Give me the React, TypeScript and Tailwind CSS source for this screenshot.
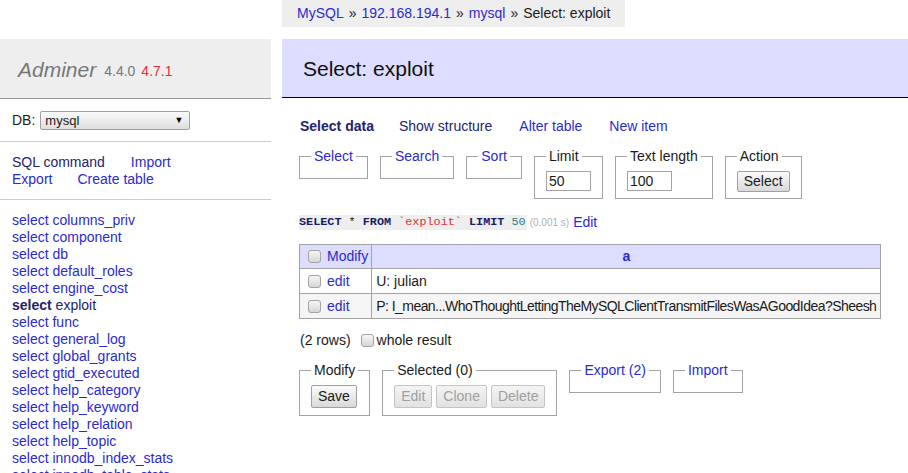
import React from 'react';

const link = 'text-[#2a2ad2]';
const visited = 'text-[#23236b]';

const tables = [
  'columns_priv',
  'component',
  'db',
  'default_roles',
  'engine_cost',
  'exploit',
  'func',
  'general_log',
  'global_grants',
  'gtid_executed',
  'help_category',
  'help_keyword',
  'help_relation',
  'help_topic',
  'innodb_index_stats',
  'innodb_table_stats',
  'password_history',
  'plugin',
];

function Check(): React.ReactElement {
  return (
    <span className="inline-block h-[13px] w-[13px] shrink-0 rounded-[3px] border border-[#a3a3a3] bg-linear-to-b from-[#f6f6f6] to-[#d6d6d6]" />
  );
}

function Button({ label, disabled }: { label: string; disabled?: boolean }): React.ReactElement {
  return (
    <span
      className={
        'inline-flex h-[23px] items-center rounded-[2px] border px-[6px] ' +
        (disabled
          ? 'border-[#c4c4c4] bg-linear-to-b from-[#f4f4f4] to-[#e2e2e2] text-[#a0a0a0]'
          : 'border-[#a0a0a0] bg-linear-to-b from-[#fbfbfb] to-[#d9d9d9] text-[#1a1a1a]')
      }
    >
      {label}
    </span>
  );
}

function Box({
  legend,
  asLink,
  children,
}: {
  legend: string;
  asLink?: boolean;
  children?: React.ReactNode;
}): React.ReactElement {
  return (
    <fieldset className="border border-[#a3a3a3] px-[11px] pt-[6px] pb-[7px]">
      <legend className={'px-[3px] ' + (asLink ? link : '')}>{legend}</legend>
      {children}
    </fieldset>
  );
}

function TextInput({ value }: { value: string }): React.ReactElement {
  return (
    <span className="flex h-[20px] w-[45px] items-center border border-[#a3a3a3] bg-white px-[2px] text-[#1a1a1a]">
      {value}
    </span>
  );
}

export default function App(): React.ReactElement {
  return (
    <div className="flex min-h-screen bg-white font-['Liberation_Sans',Arial,sans-serif] text-[14px] leading-[17px] text-[#1a1a1a]">
      {/* sidebar */}
      <aside className="w-[271px] shrink-0 pt-[39px]">
        <div className="flex h-[60px] items-center border-b border-[#999] bg-[#eee] pl-[18px] pt-[2px]">
          <span className="text-[21px] italic text-[#777]">Adminer</span>
          <span className="ml-[8px] mt-[3px] text-[14px] text-[#777]">4.4.0</span>
          <span className="ml-[6px] mt-[3px] text-[14px] text-[#e0303c]">4.7.1</span>
        </div>
        <div className="flex h-[43px] items-center border-b border-[#ccc] px-[12px]">
          <span>DB:</span>
          <span className="ml-[5px] flex h-[19px] w-[150px] items-center justify-between rounded-[2px] border border-[#a0a0a0] bg-linear-to-b from-[#fbfbfb] to-[#dedede] pl-[4px] pr-[6px] text-[13px]">
            mysql
            <span className="text-[9px] text-black">▼</span>
          </span>
        </div>
        <div className="border-b border-[#ccc] px-[12px] pt-[12px] pb-[11px]">
          <div>
            <span className={visited}>SQL command</span>
            <span className={'ml-[26px] ' + link}>Import</span>
          </div>
          <div>
            <span className={link}>Export</span>
            <span className={'ml-[25px] ' + link}>Create table</span>
          </div>
        </div>
        <ul className="px-[12px] pt-[12px]">
          {tables.map((t) =>
            t === 'exploit' ? (
              <li key={t} className={visited}>
                <span className="font-bold">select</span> {t}
              </li>
            ) : (
              <li key={t} className={link}>
                select {t}
              </li>
            ),
          )}
        </ul>
      </aside>

      {/* content */}
      <main className="ml-[11px] min-w-0 flex-1">
        <div className="inline-flex h-[27px] items-center whitespace-nowrap bg-[#eee] px-[15px]">
          <span className={link}>MySQL</span>
          <span className="mx-[5px]">»</span>
          <span className={link}>192.168.194.1</span>
          <span className="mx-[5px]">»</span>
          <span className={link}>mysql</span>
          <span className="mx-[5px]">»</span>
          <span>Select: exploit</span>
        </div>

        <h2 className="mt-[12px] flex h-[59px] items-center border-b border-black bg-[#ddf] pl-[21px] text-[21px] text-[#111]">
          Select: exploit
        </h2>

        <div className="pl-[17px]">
          <div className="mt-[20px] flex pl-[1px]">
            <span className={'font-bold ' + visited}>Select data</span>
            <span className={'ml-[25px] ' + visited}>Show structure</span>
            <span className={'ml-[27px] ' + link}>Alter table</span>
            <span className={'ml-[27px] ' + link}>New item</span>
          </div>

          <div className="mt-[13px] flex items-start gap-[12px]">
            <Box legend="Select" asLink />
            <Box legend="Search" asLink />
            <Box legend="Sort" asLink />
            <Box legend="Limit">
              <TextInput value="50" />
            </Box>
            <Box legend="Text length">
              <TextInput value="100" />
            </Box>
            <Box legend="Action">
              <span className="flex h-[20px] items-center">
                <span className="inline-flex h-[21px] items-center rounded-[2px] border border-[#a0a0a0] bg-linear-to-b from-[#fbfbfb] to-[#d9d9d9] px-[6px]">
                  Select
                </span>
              </span>
            </Box>
          </div>

          <div className="mt-[15px] flex items-center">
            <code className="bg-[#eee] pr-[1px] font-['Liberation_Mono',monospace] text-[11.8px] leading-[15px]">
              <span className="font-bold text-[#1c1c66]">SELECT</span> *{' '}
              <span className="font-bold text-[#1c1c66]">FROM</span>{' '}
              <span className="text-[#e0303c]">`exploit`</span>{' '}
              <span className="font-bold text-[#1c1c66]">LIMIT</span>{' '}
              <span className="text-[#2f8080]">50</span>
            </code>
            <span className="ml-[3px] text-[10px] text-[#b0b0b0]">(0.001 s)</span>
            <span className={'ml-[4px] ' + link}>Edit</span>
          </div>

          <table className="mt-[13px] border-collapse border border-[#a3a3a3]">
            <thead>
              <tr className="h-[24px] bg-[#ddf]">
                <th className="w-[71px] border border-[#a3a3a3] pl-[8px] pr-[3px] text-left font-normal">
                  <span className="flex items-center gap-[6px]">
                    <Check />
                    <span className={link}>Modify</span>
                  </span>
                </th>
                <th className={'border border-[#a3a3a3] px-[4px] font-bold ' + link}>a</th>
              </tr>
            </thead>
            <tbody>
              <tr className="h-[25px] bg-white">
                <td className="border border-[#a3a3a3] pl-[8px] pr-[3px]">
                  <span className="flex items-center gap-[6px]">
                    <Check />
                    <span className={link}>edit</span>
                  </span>
                </td>
                <td className="border border-[#a3a3a3] px-[4px] whitespace-nowrap">U: julian</td>
              </tr>
              <tr className="h-[25px] bg-[#f5f5f5]">
                <td className="border border-[#a3a3a3] pl-[8px] pr-[3px]">
                  <span className="flex items-center gap-[6px]">
                    <Check />
                    <span className={link}>edit</span>
                  </span>
                </td>
                <td className="border border-[#a3a3a3] px-[4px] whitespace-nowrap tracking-[-0.55px]">
                  P: I_mean...WhoThoughtLettingTheMySQLClientTransmitFilesWasAGoodIdea?Sheesh
                </td>
              </tr>
            </tbody>
          </table>

          <div className="mt-[13px] flex items-center pl-[1px]">
            <span>(2 rows)</span>
            <span className="ml-[10px] mr-[3px] flex items-center">
              <Check />
            </span>
            <span>whole result</span>
          </div>

          <div className="mt-[13px] flex items-start gap-[12px]">
            <Box legend="Modify">
              <Button label="Save" />
            </Box>
            <Box legend="Selected (0)">
              <span className="flex gap-[4px]">
                <Button label="Edit" disabled />
                <Button label="Clone" disabled />
                <Button label="Delete" disabled />
              </span>
            </Box>
            <Box legend="Export (2)" asLink />
            <Box legend="Import" asLink />
          </div>
        </div>
      </main>
    </div>
  );
}
